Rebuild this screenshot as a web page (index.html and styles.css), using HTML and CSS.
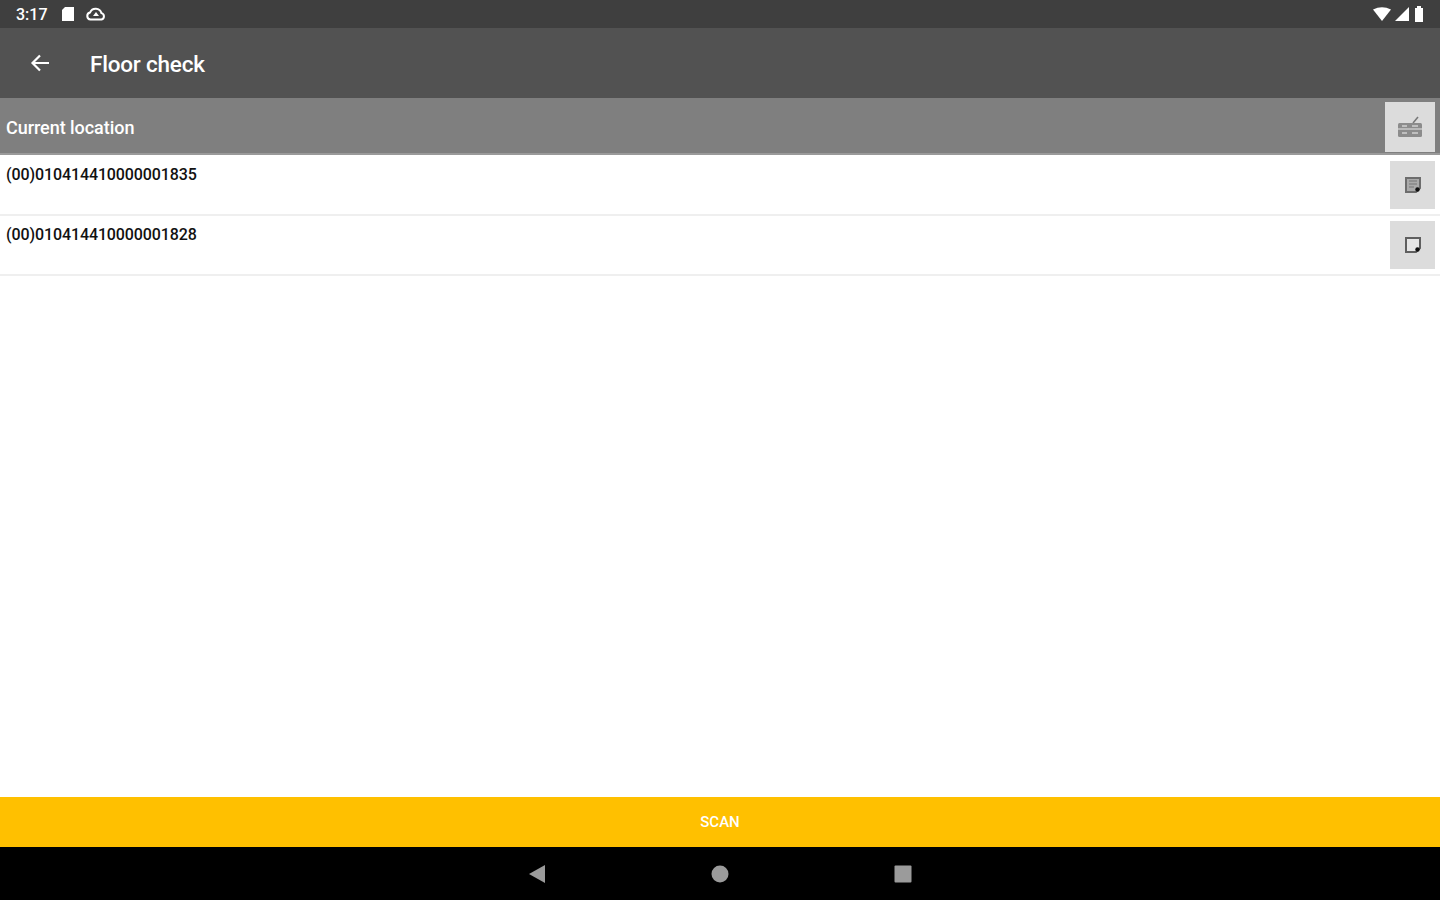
FILE: index.html
```html
<!DOCTYPE html>
<html lang="en">
<head>
  <meta charset="UTF-8" />
  <meta name="viewport" content="width=device-width, initial-scale=1.0" />
  <title>Floor check</title>
  <link rel="stylesheet" href="styles.css">
</head>
<body>
  <div class="app">
    <div class="status-bar">
      <div class="status-left">
        <span class="clock">3:17</span>
        <svg class="sd-icon" width="14" height="16" viewBox="0 0 14 16"><path d="M4 1h9v14H1V4z" fill="#fff"/></svg>
        <svg class="cloud-icon" width="22" height="16" viewBox="0 0 22 16"><path d="M5.500 13.500a3.600 3.600 0 0 1-.4-7.100 6 6 0 0 1 11.300.7 3.300 3.300 0 0 1 .1 6.400z" fill="none" stroke="#fff" stroke-width="2"/><path d="M11 6l3 4H8z" fill="#fff"/></svg>
      </div>
      <div class="status-right">
        <svg class="wifi-icon" width="18" height="14" viewBox="0 0 18 14"><path d="M0 2.500Q9-2 18 2.500L9 14z" fill="#fff"/></svg>
        <svg class="signal-icon" width="15" height="14" viewBox="0 0 15 14"><path d="M15 0v14H1z" fill="#fff"/></svg>
        <svg width="10" height="16" viewBox="0 0 10 16"><path d="M3 2V0h4v2h2v14H1V2z" fill="#fff"/></svg>
      </div>
    </div>

    <header class="toolbar">
      <svg class="back-icon" width="22" height="22" viewBox="0 0 22 22"><path d="M20 11H4M11 3.500 3.500 11l7.500 7.500" fill="none" stroke="#fff" stroke-width="2.200"/></svg>
      <h1 class="title">Floor check</h1>
    </header>

    <div class="location-bar">
      <span class="location-label">Current location</span>
      <button class="location-btn">
        <svg width="26" height="22" viewBox="0 0 26 22"><path d="M16 7l5-6" stroke="#777" stroke-width="1.500"/><rect x="1" y="7" width="24" height="14" rx="1.500" fill="#8c8c8c"/><path d="M1 13h24" stroke="#d8d8d8" stroke-width="1.200"/><path d="M5 10h5M15 10h6M5 17h5M15 17h6" stroke="#cfcfcf" stroke-width="1.500"/></svg>
      </button>
    </div>

    <ul class="items">
      <li class="item">
        <span class="item-code">(00)010414410000001835</span>
        <button class="note-btn">
          <svg width="20" height="20" viewBox="0 0 20 20"><path d="M3 3h14v10l-4 4H3z" fill="#aaa" stroke="#6d6d6d" stroke-width="2"/><path d="M6 6h8M6 9h8M6 12h5" stroke="#777" stroke-width="1"/><circle cx="14.500" cy="14.500" r="2.200" fill="#111"/></svg>
        </button>
      </li>
      <li class="item">
        <span class="item-code">(00)010414410000001828</span>
        <button class="note-btn">
          <svg width="20" height="20" viewBox="0 0 20 20"><path d="M3 3h14v10l-4 4H3z" fill="#e6e6e6" stroke="#5f5f5f" stroke-width="2"/><circle cx="14.500" cy="14.500" r="2.200" fill="#111"/></svg>
        </button>
      </li>
    </ul>

    <button class="scan-btn">SCAN</button>

    <nav class="nav-bar">
      <svg width="18" height="20" viewBox="0 0 18 20"><path d="M17 1v18L1 10z" fill="#9b9b9b"/></svg>
      <svg width="18" height="18" viewBox="0 0 18 18"><circle cx="9" cy="9" r="8.500" fill="#9b9b9b"/></svg>
      <svg width="18" height="18" viewBox="0 0 18 18"><rect x="0.500" y="0.500" width="17" height="17" rx="1" fill="#9b9b9b"/></svg>
    </nav>
  </div>
</body>
</html>
```

FILE: styles.css
```css
* {
  box-sizing: border-box;
}
body {
  margin: 0;
  background: #fff;
  font-family: Roboto, "Liberation Sans", sans-serif;
}
.app {
  display: flex;
  flex-direction: column;
  height: 900px;
  overflow: hidden;
}
.status-bar {
  height: 28px;
  flex: none;
  display: flex;
  justify-content: space-between;
  align-items: center;
  padding: 0 16px 0 16px;
  background: #3f3f3f;
  color: #fff;
}
.status-left, .status-right {
  display: flex;
  align-items: center;
}
.clock {
  font-size: 16px;
  font-weight: 500;
  margin-right: 13px;
}
.sd-icon {
  margin-right: 10px;
}
.wifi-icon {
  margin-right: 3px;
}
.signal-icon {
  margin-right: 5px;
}
.toolbar {
  height: 70px;
  flex: none;
  display: flex;
  align-items: center;
  padding-left: 29px;
  background: #525252;
}
.back-icon {
  margin-right: 39px;
}
.title {
  margin: 0;
  padding-top: 2px;
  color: #fff;
  font-size: 22.500px;
  font-weight: 500;
  letter-spacing: -0.2px;
}
.location-bar {
  height: 57px;
  flex: none;
  display: flex;
  justify-content: space-between;
  align-items: center;
  padding: 3px 5px 0 6px;
  background: #7f7f7f;
  border-bottom: 2px solid #9a9a9a;
}
.location-label {
  color: #fff;
  font-size: 18px;
  font-weight: 500;
  letter-spacing: -0.05px;
}
.location-btn {
  width: 50px;
  height: 50px;
  padding: 0;
  display: flex;
  align-items: center;
  justify-content: center;
  background: #dcdcdc;
  border: none;
}
.items {
  list-style: none;
  margin: 0;
  padding: 1px 0 0;
  flex: 1;
}
.item {
  height: 60px;
  display: flex;
  justify-content: space-between;
  padding: 5px 5px 0 6px;
  border-bottom: 2px solid #efefef;
}
.item-code {
  color: #111;
  font-size: 16px;
  line-height: 17px;
  margin-top: 5px;
  font-weight: 500;
  letter-spacing: -0.1px;
}
.note-btn {
  width: 45px;
  height: 48px;
  padding: 0;
  display: flex;
  align-items: center;
  justify-content: center;
  background: #dcdcdc;
  border: none;
}
.scan-btn {
  height: 50px;
  flex: none;
  width: 100%;
  padding: 0;
  background: #ffc000;
  color: #fff;
  border: none;
  font-family: inherit;
  font-size: 15px;
  font-weight: 500;
}
.nav-bar {
  height: 53px;
  flex: none;
  display: flex;
  justify-content: center;
  align-items: center;
  gap: 165px;
  background: #000;
}
```
